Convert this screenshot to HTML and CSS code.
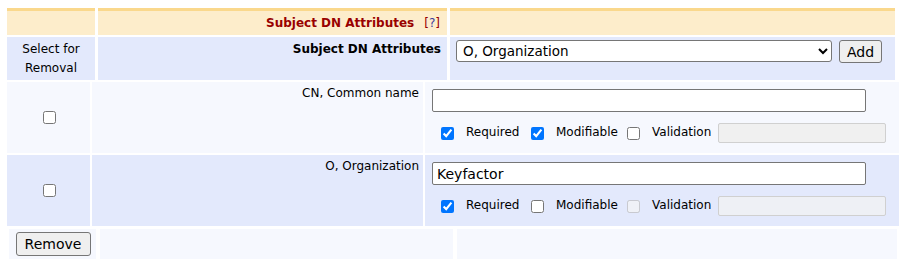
FILE: index.html
```html
<!DOCTYPE html>
<html>
<head>
<meta charset="utf-8">
<link rel="stylesheet" href="styles.css">
</head>
<body>
<div class="sec sec-head">
  <div class="hcell"></div>
  <div class="hcell htitle">Subject DN Attributes <span class="help">[<a href="#">?</a>]</span></div>
  <div class="hcell"></div>

  <div class="cell blue center twol">Select for Removal</div>
  <div class="cell blue right bold">Subject DN Attributes</div>
  <div class="cell blue addrow">
    <select class="sel"><option>O, Organization</option></select>
    <button class="btn add">Add</button>
  </div>
</div>

<div class="sec sec-rows">
  <div class="cell light mid"><input type="checkbox"></div>
  <div class="cell light right lbl">CN, Common name</div>
  <div class="cell light field">
    <input type="text" class="txt">
    <div class="opts">
      <label class="opt o1"><input type="checkbox" checked><span>Required</span></label>
      <label class="opt o2"><input type="checkbox" checked><span>Modifiable</span></label>
      <label class="opt o3"><input type="checkbox"><span>Validation</span></label>
      <input type="text" class="val" disabled>
    </div>
  </div>

  <div class="cell blue mid"><input type="checkbox"></div>
  <div class="cell blue right lbl">O, Organization</div>
  <div class="cell blue field">
    <input type="text" class="txt" value="Keyfactor">
    <div class="opts">
      <label class="opt o1"><input type="checkbox" checked><span>Required</span></label>
      <label class="opt o2"><input type="checkbox"><span>Modifiable</span></label>
      <label class="opt o3"><input type="checkbox" disabled><span>Validation</span></label>
      <input type="text" class="val" disabled>
    </div>
  </div>
</div>

<div class="sec sec-foot">
  <div class="cell light center fcell"><button class="btn rem">Remove</button></div>
  <div class="cell light"></div>
  <div class="cell light"></div>
</div>
</body>
</html>
```
FILE: styles.css
```css
html, body {
  margin: 0;
  padding: 0;
  background: #ffffff;
}
body {
  padding: 8px 0 0 7px;
  font-family: "DejaVu Sans", Verdana, sans-serif;
  font-size: 12px;
  color: #000;
}
.sec {
  display: grid;
}
.sec-head {
  grid-template-columns: 88px 349px 445px;
  grid-template-rows: 27px 43px;
  column-gap: 3px;
  row-gap: 2px;
}
.sec-rows {
  margin-top: 2px;
  grid-template-columns: 83px 331px 474px;
  grid-template-rows: 71px 71px;
  column-gap: 2px;
  row-gap: 2px;
}
.sec-foot {
  margin-top: 3px;
  margin-left: 2px;
  grid-template-columns: 87px 353px 440px;
  grid-template-rows: 30px;
  column-gap: 4px;
}
.hcell {
  background: #fdedcb;
  border-top: 3px solid #fad88c;
  box-sizing: border-box;
}
.htitle {
  display: flex;
  justify-content: flex-end;
  align-items: center;
  padding-right: 7px;
  color: #990000;
  font-weight: bold;
}
.help {
  font-weight: normal;
  margin-left: 10px;
  color: #990000;
}
.help a {
  color: #3c3c9a;
  text-decoration: none;
}
.cell {
  box-sizing: border-box;
  line-height: 19px;
}
.blue { background: #e3e9fc; }
.light { background: #f6f8fe; }
.center { text-align: center; }
.right { text-align: right; }
.bold { font-weight: bold; padding: 3px 6px 0 0; }
.twol { padding: 3px 4px 0; }
.addrow {
  display: flex;
  align-items: flex-start;
  padding: 3px 0 0 6px;
}
.sel {
  width: 376px;
  height: 22px;
  font-family: "DejaVu Sans", Verdana, sans-serif;
  font-size: 13.5px;
  margin: 0;
  padding: 0 2px;
  border: 1px solid #767676;
  border-radius: 3px;
  background: #fff;
  color: #000;
}
.btn {
  font-family: "DejaVu Sans", Verdana, sans-serif;
  font-size: 14px;
  margin: 0;
  padding: 0 6px;
  background: #efefef;
  border: 1px solid #767676;
  border-radius: 3px;
  color: #000;
}
.add {
  margin-left: 7px;
  width: 43px;
  height: 23px;
}
.mid {
  display: flex;
  align-items: center;
  justify-content: center;
}
.mid input {
  margin: 0 0 0 1px;
  width: 13px;
  height: 13px;
}
.lbl {
  padding: 2px 4px 0 0;
}
.field {
  padding: 7px 0 0 7px;
}
.txt {
  display: block;
  box-sizing: border-box;
  width: 434px;
  height: 23px;
  margin: 0;
  padding: 1px 4px 0;
  border: 1px solid #767676;
  border-radius: 2px;
  font-family: "DejaVu Sans", Verdana, sans-serif;
  font-size: 14px;
  background: #fff;
  color: #000;
}
.opts {
  display: flex;
  align-items: center;
  margin-top: 11px;
  padding-left: 9px;
  height: 20px;
}
.opt {
  display: flex;
  align-items: center;
  flex: none;
}
.o1 { width: 90px; }
.o2 { width: 96px; }
.o3 { width: 91px; }
.opt input {
  margin: 0 12px 0 0;
  width: 13px;
  height: 13px;
  flex: none;
}
.opt span {
  position: relative;
  top: -1px;
  white-space: nowrap;
}
.val {
  box-sizing: border-box;
  width: 168px;
  height: 20px;
  margin: 0;
  border: 1px solid #d0d0d0;
  border-radius: 2px;
  background: #f0f0f0;
  font-size: 12px;
}
.blue .val {
  background: #eef0f5;
}
.fcell {
  display: flex;
  justify-content: center;
  align-items: flex-start;
  padding-top: 3px;
}
.rem {
  width: 75px;
  height: 24px;
  margin-left: 1px;
}
```
